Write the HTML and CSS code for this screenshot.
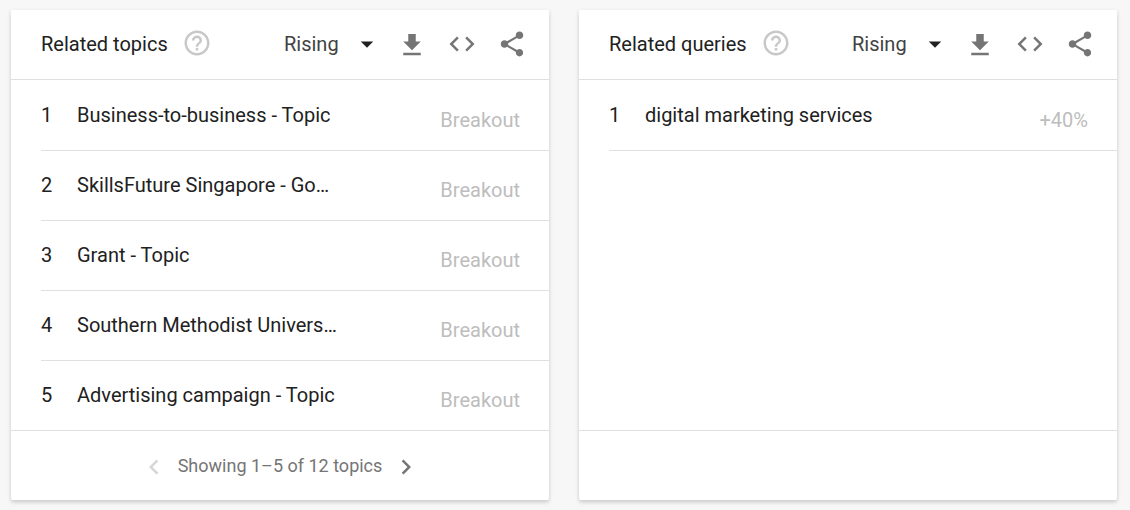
FILE: index.html
```html
<!DOCTYPE html>
<html lang="en">
<head>
<meta charset="utf-8">
<title>Related topics and queries</title>
<link rel="stylesheet" href="styles.css">
</head>
<body>
<svg class="sprite" aria-hidden="true">
  <symbol id="help" viewBox="0 0 24 24"><path d="M11 18h2v-2h-2v2zm1-16C6.48 2 2 6.48 2 12s4.480 10 10 10 10-4.480 10-10S17.520 2 12 2zm0 18c-4.410 0-8-3.590-8-8s3.590-8 8-8 8 3.590 8 8-3.590 8-8 8zm0-14c-2.210 0-4 1.790-4 4h2c0-1.100.9-2 2-2s2 .9 2 2c0 2-3 1.750-3 5h2c0-2.250 3-2.500 3-5 0-2.210-1.790-4-4-4z"/></symbol>
  <symbol id="download" viewBox="0 0 24 24"><path d="M19 10h-4V4H9v6H5l7 7 7-7zM5 19v2h14v-2H5z"/></symbol>
  <symbol id="code" viewBox="0 0 24 24"><path d="M9.400 16.600L4.800 12l4.600-4.600L8 6l-6 6 6 6 1.400-1.400zm5.200 0l4.600-4.600-4.600-4.600L16 6l6 6-6 6-1.400-1.400z"/></symbol>
  <symbol id="share" viewBox="0 0 24 24"><path d="M18 16.080c-.76 0-1.440.3-1.960.77L8.910 12.700c.05-.23.09-.46.09-.7s-.04-.47-.09-.7l7.050-4.110c.54.5 1.250.81 2.040.81 1.660 0 3-1.340 3-3s-1.340-3-3-3-3 1.340-3 3c0 .24.04.47.09.7L8.040 9.810C7.500 9.310 6.790 9 6 9c-1.660 0-3 1.340-3 3s1.340 3 3 3c.79 0 1.500-.31 2.040-.81l7.120 4.160c-.05.21-.08.43-.08.65 0 1.610 1.310 2.920 2.920 2.920s2.920-1.310 2.920-2.920-1.310-2.920-2.920-2.920z"/></symbol>
  <symbol id="caret" viewBox="0 0 24 24"><path d="M7 10l5 5 5-5z"/></symbol>
  <symbol id="prev" viewBox="0 0 24 24"><path d="M15.410 7.410L14 6l-6 6 6 6 1.410-1.410L10.830 12z"/></symbol>
  <symbol id="next" viewBox="0 0 24 24"><path d="M10 6L8.590 7.410 13.170 12l-4.580 4.590L10 18l6-6z"/></symbol>
</svg>
<main class="widgets">
  <section class="card">
    <header class="card-header">
      <h2 class="title">Related topics</h2>
      <button class="icon-button help" aria-label="Help"><svg class="icon"><use href="#help"/></svg></button>
      <div class="picker">
        <select class="picker-select" aria-label="Sort topics"><option>Rising</option><option>Top</option></select>
        <svg class="icon picker-caret"><use href="#caret"/></svg>
      </div>
      <div class="actions">
        <button class="icon-button" aria-label="Download"><svg class="icon"><use href="#download"/></svg></button>
        <button class="icon-button" aria-label="Embed"><svg class="icon"><use href="#code"/></svg></button>
        <button class="icon-button" aria-label="Share"><svg class="icon"><use href="#share"/></svg></button>
      </div>
    </header>
    <ol class="list">
      <li class="row"><span class="rank">1</span><a class="name" href="#">Business-to-business - Topic</a><span class="value">Breakout</span></li>
      <li class="row"><span class="rank">2</span><a class="name" href="#">SkillsFuture Singapore - Go…</a><span class="value">Breakout</span></li>
      <li class="row"><span class="rank">3</span><a class="name" href="#">Grant - Topic</a><span class="value">Breakout</span></li>
      <li class="row"><span class="rank">4</span><a class="name" href="#">Southern Methodist Univers…</a><span class="value">Breakout</span></li>
      <li class="row"><span class="rank">5</span><a class="name" href="#">Advertising campaign - Topic</a><span class="value">Breakout</span></li>
    </ol>
    <footer class="card-footer">
      <button class="icon-button" aria-label="Previous" disabled><svg class="icon"><use href="#prev"/></svg></button>
      <span class="page-label">Showing 1–5 of 12 topics</span>
      <button class="icon-button" aria-label="Next"><svg class="icon"><use href="#next"/></svg></button>
    </footer>
  </section>
  <section class="card">
    <header class="card-header">
      <h2 class="title">Related queries</h2>
      <button class="icon-button help" aria-label="Help"><svg class="icon"><use href="#help"/></svg></button>
      <div class="picker">
        <select class="picker-select" aria-label="Sort queries"><option>Rising</option><option>Top</option></select>
        <svg class="icon picker-caret"><use href="#caret"/></svg>
      </div>
      <div class="actions">
        <button class="icon-button" aria-label="Download"><svg class="icon"><use href="#download"/></svg></button>
        <button class="icon-button" aria-label="Embed"><svg class="icon"><use href="#code"/></svg></button>
        <button class="icon-button" aria-label="Share"><svg class="icon"><use href="#share"/></svg></button>
      </div>
    </header>
    <ol class="list">
      <li class="row"><span class="rank">1</span><a class="name" href="#">digital marketing services</a><span class="value">+40%</span></li>
    </ol>
    <footer class="card-footer"></footer>
  </section>
</main>
</body>
</html>
```
FILE: styles.css
```css
* {
  box-sizing: border-box;
}

body {
  margin: 0;
  background: #f7f7f7;
  color: #212121;
  font-family: Roboto, "Liberation Sans", sans-serif;
  font-size: 20px;
  line-height: 24px;
}

.sprite {
  display: none;
}

.widgets {
  display: grid;
  grid-template-columns: 1fr 1fr;
  gap: 30px;
  padding: 10px 13px 10px 11px;
}

.card {
  display: flex;
  flex-direction: column;
  min-width: 0;
  background: #fff;
  border-radius: 2px;
  box-shadow: 0 2px 4px rgba(0, 0, 0, 0.2);
}

.card-header {
  display: flex;
  align-items: center;
  min-height: 70px;
  padding: 0 22px 2px 30px;
  border-bottom: 1px solid #e0e0e0;
}

.title {
  margin: 0;
  font-size: 20px;
  font-weight: 400;
  white-space: nowrap;
}

.icon {
  display: block;
  width: 30px;
  height: 30px;
  fill: currentColor;
}

.icon-button {
  flex: none;
  padding: 0;
  border: 0;
  background: none;
  color: #757575;
  cursor: pointer;
}

.icon-button:disabled {
  color: #d6d6d6;
  cursor: default;
}

.help {
  margin: 0 0 2px 14px;
  color: #c8c8c8;
}

.picker {
  position: relative;
  margin-left: auto;
}

.picker-select {
  display: block;
  width: 98px;
  height: 30px;
  padding: 0;
  border: 0;
  appearance: none;
  background: none;
  color: #424242;
  font: inherit;
}

.picker-caret {
  position: absolute;
  top: 0;
  right: 0;
  color: #212121;
  pointer-events: none;
}

.actions {
  display: flex;
  gap: 20px;
  margin-left: 15px;
}

.list {
  flex: 1;
  margin: 0;
  padding: 1px 0 0 30px;
  list-style: none;
}

.row {
  display: flex;
  align-items: center;
  height: 70px;
  padding: 0 29px 2px 0;
  border-bottom: 1px solid #e0e0e0;
}

.row:nth-child(5) {
  height: 69px;
  border-bottom: 0;
}

.rank {
  flex: none;
  width: 36px;
}

.name {
  flex: 1;
  min-width: 0;
  overflow: hidden;
  color: inherit;
  text-decoration: none;
  text-overflow: ellipsis;
  white-space: nowrap;
}

.value {
  padding-top: 10px;
  color: #bdbdbd;
}

.card-footer {
  display: flex;
  align-items: center;
  justify-content: center;
  gap: 9px;
  min-height: 70px;
  padding-top: 2px;
  border-top: 1px solid #e0e0e0;
  color: #757575;
  font-size: 18px;
}

.page-label {
  padding-bottom: 2px;
}
```
